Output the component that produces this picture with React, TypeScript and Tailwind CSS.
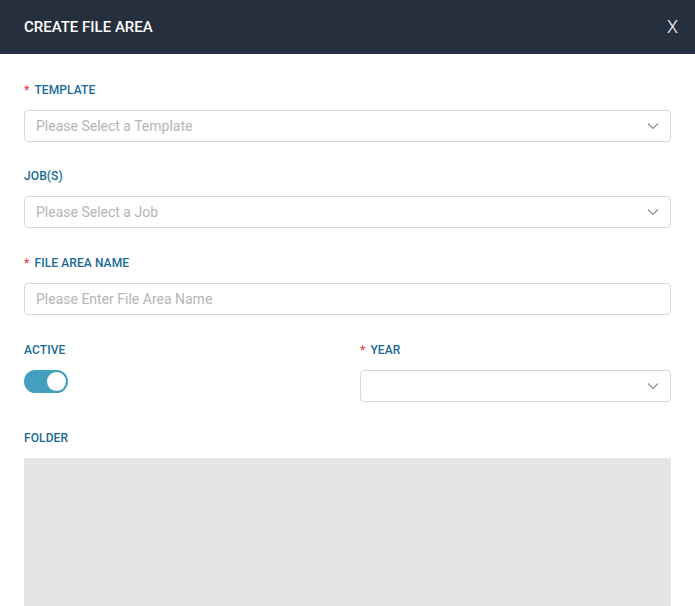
const font = { fontFamily: "Roboto, 'Noto Sans', sans-serif" };

function Label({ text, required }: { text: string; required?: boolean }) {
  return (
    <div className="text-[12px] leading-[19px] font-medium text-[#186b96] mb-[10px] tracking-[0.1px]">
      {required && <span className="text-[#e5484d] mr-[5px]">*</span>}
      {text}
    </div>
  );
}

function Chevron() {
  return (
    <svg width="12" height="8" viewBox="0 0 12 8" fill="none" className="text-[#8a8a8a]">
      <polyline points="1,1.5 6,6.5 11,1.5" stroke="currentColor" strokeWidth="1.1" />
    </svg>
  );
}

function SelectBox({ placeholder }: { placeholder?: string }) {
  return (
    <div className="h-8 w-full border border-[#d9d9d9] rounded-sm flex items-center justify-between pl-[11px] pr-[11px] bg-white">
      <span className="text-[14px] text-[#b5b5b5]">{placeholder}</span>
      <Chevron />
    </div>
  );
}

export default function App() {
  return (
    <div className="w-[695px] h-[606px] overflow-hidden bg-white" style={font}>
      <div className="h-[54px] bg-[#252f3d] flex items-center justify-between pl-6 pr-[17px]">
        <h1 className="text-white text-[15px] font-medium">CREATE FILE AREA</h1>
        <button className="text-white text-[18px] leading-none font-light">X</button>
      </div>

      <div className="px-6 pt-[27px] flex flex-col">
        <div>
          <Label text="TEMPLATE" required />
          <SelectBox placeholder="Please Select a Template" />
        </div>
        <div className="mt-[25px]">
          <Label text="JOB(S)" />
          <SelectBox placeholder="Please Select a Job" />
        </div>
        <div className="mt-[26px]">
          <Label text="FILE AREA NAME" required />
          <div className="h-8 w-full border border-[#d9d9d9] rounded-sm flex items-center px-[11px]">
            <span className="text-[14px] text-[#b5b5b5]">Please Enter File Area Name</span>
          </div>
        </div>
        <div className="mt-[26px] grid grid-cols-2 gap-x-[25px]">
          <div>
            <Label text="ACTIVE" />
            <div className="mt-[6px] w-[44px] h-[23px] rounded-full bg-[#439fbd] flex items-center justify-end pr-[2px]">
              <div className="w-[19px] h-[19px] rounded-full bg-white" />
            </div>
          </div>
          <div>
            <Label text="YEAR" required />
            <SelectBox />
          </div>
        </div>
        <div className="mt-[27px]">
          <Label text="FOLDER" />
          <div className="h-[200px] w-full bg-[#e4e5e6]" />
        </div>
      </div>
    </div>
  );
}
